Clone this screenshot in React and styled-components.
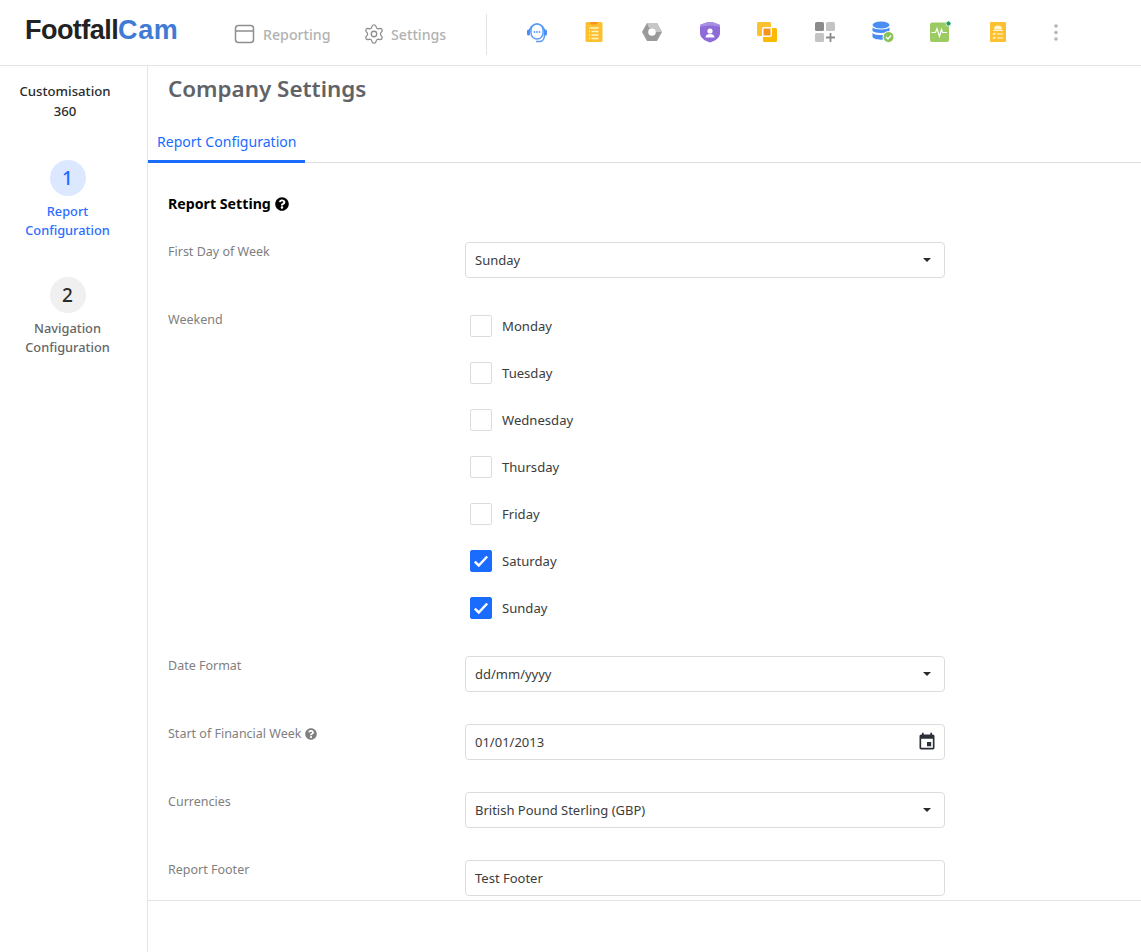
import styled, { createGlobalStyle } from 'styled-components';
import { Settings } from 'lucide-react';
import { FaQuestionCircle } from 'react-icons/fa';

const GlobalStyle = createGlobalStyle`
  html, body {
    margin: 0;
    padding: 0;
    height: 952px;
    overflow: hidden;
    background: #fff;
    font-family: 'Noto Sans', 'Open Sans', sans-serif;
    color: #212529;
  }
  * {
    box-sizing: border-box;
  }
`;

const Page = styled.div`
  height: 952px;
  display: flex;
  flex-direction: column;
`;

const Header = styled.header`
  height: 66px;
  flex: none;
  display: flex;
  align-items: center;
  padding-left: 25px;
  border-bottom: 1px solid #e4e4e4;
`;

const Logo = styled.div`
  width: 209px;
  margin-top: -5px;
  font-family: 'Liberation Sans', Arial, sans-serif;
  font-size: 27px;
  font-weight: 700;
  letter-spacing: -0.55px;
  color: #222;

  & > span {
    letter-spacing: 0.6px;
    color: #3f7bd5;
  }
`;

const NavItem = styled.div`
  display: flex;
  align-items: center;
  gap: ${(p) => p.$gap}px;
  width: ${(p) => p.$width}px;
  margin-top: 3px;
  font-size: 14.2px;
  font-weight: 500;
  color: #b2b2b2;

  & > svg {
    flex: none;
    color: #8e8e8e;
  }
`;

const Divider = styled.div`
  width: 1px;
  height: 41px;
  margin-left: 9px;
  margin-top: 3px;
  background: #e4e4e4;
`;

const IconBar = styled.div`
  display: flex;
  margin-left: 21px;
  margin-top: -2px;
`;

const IconSlot = styled.div`
  width: 57.65px;
  height: 24px;
  display: flex;
  align-items: center;
  justify-content: center;
`;

const Body = styled.div`
  flex: 1;
  display: flex;
  min-height: 0;
`;

const Sidebar = styled.aside`
  width: 148px;
  flex: none;
  border-right: 1px solid #e4e4e4;
  padding-top: 15px;
  text-align: center;
`;

const SidebarTitle = styled.div`
  width: 130px;
  font-size: 13.2px;
  font-weight: 500;
  line-height: 20px;
  color: #2b2b2b;
`;

const Step = styled.div`
  width: 135px;
  margin-top: ${(p) => p.$top}px;
  display: flex;
  flex-direction: column;
  align-items: center;
`;

const StepDot = styled.div`
  width: 36px;
  height: 36px;
  border-radius: 50%;
  display: flex;
  align-items: center;
  justify-content: center;
  font-size: 19px;
  font-weight: 500;
  background: ${(p) => (p.$active ? '#dce8ff' : '#f0f0f0')};
  color: ${(p) => (p.$active ? '#1a6cff' : '#2b2b2b')};
`;

const StepLabel = styled.div`
  margin-top: 6px;
  font-size: 12.8px;
  font-weight: 500;
  line-height: 19px;
  color: ${(p) => (p.$active ? '#2c6cff' : '#666')};
`;

const Main = styled.main`
  flex: 1;
  min-width: 0;
  display: flex;
  flex-direction: column;
`;

const Scroll = styled.div`
  height: 835px;
  flex: none;
  overflow: hidden;
  border-bottom: 1px solid #e4e4e4;
`;

const Title = styled.h1`
  margin: 0;
  padding: 5px 0 0 20px;
  font-size: 22.4px;
  font-weight: 600;
  line-height: 36px;
  color: #5f6368;
`;

const Tabs = styled.div`
  margin-top: 21px;
  height: 35px;
  display: flex;
  border-bottom: 1px solid #dedede;
`;

const Tab = styled.div`
  height: 35px;
  padding: 0 9px;
  font-size: 14.05px;
  line-height: 28px;
  color: #1a6cff;
  border-bottom: 3px solid #1a6cff;
`;

const Form = styled.div`
  padding: 30px 196px 0 20px;
`;

const SectionTitle = styled.h2`
  margin: 0 0 27px;
  display: flex;
  align-items: center;
  gap: 4px;
  font-size: 14.2px;
  font-weight: 700;
  line-height: 22px;
  color: #000;
`;

const Row = styled.div`
  display: grid;
  grid-template-columns: 297px 480px;
  margin-bottom: 32px;
`;

const Label = styled.div`
  display: flex;
  align-items: center;
  align-self: start;
  gap: 4px;
  margin-top: 1px;
  font-size: 12.5px;
  line-height: 18px;
  color: #808080;
`;

const Field = styled.div`
  height: 36px;
  display: flex;
  align-items: center;
  justify-content: space-between;
  padding: 0 11px 0 9px;
  border: 1px solid #dcdcdc;
  border-radius: 4px;
  font-size: 13px;
  color: #3c3c3c;

  & > svg {
    margin-right: -4px;
  }
`;

const Caret = styled.span`
  width: 0;
  height: 0;
  margin-right: 2px;
  border-left: 4px solid transparent;
  border-right: 4px solid transparent;
  border-top: 4px solid #2b2b2b;
`;

const CheckList = styled.div`
  display: flex;
  flex-direction: column;
  gap: 25px;
  padding: 5px 0 5px 5px;
`;

const CheckRow = styled.label`
  display: flex;
  align-items: center;
  gap: 10px;
  height: 22px;
  font-size: 13.1px;
  color: #3c3c3c;
`;

const Box = styled.span`
  width: 22px;
  height: 22px;
  display: flex;
  align-items: center;
  justify-content: center;
  border-radius: 2px;
  border: 1px solid ${(p) => (p.$checked ? '#1a6cff' : '#dcdcdc')};
  background: ${(p) => (p.$checked ? '#1a6cff' : '#fff')};
`;

const Headset = () => (
  <svg width="24" height="24" viewBox="0 0 24 24">
    <path d="M4.5 12a7.5 8 0 0 1 15 0v4a5 6 0 0 1-5 5.5H11" fill="none" stroke="#5a9bf6" strokeWidth="1.6" />
    <rect x="6" y="4" width="12" height="15" rx="6" fill="#fff" stroke="#5a9bf6" strokeWidth="1.4" />
    <rect x="2" y="9.5" width="3" height="6" rx="1.5" fill="#4a8df5" />
    <rect x="19" y="9.5" width="3" height="6" rx="1.5" fill="#4a8df5" />
    <circle cx="9.5" cy="12" r=".9" fill="#5a9bf6" />
    <circle cx="12" cy="12" r=".9" fill="#5a9bf6" />
    <circle cx="14.5" cy="12" r=".9" fill="#5a9bf6" />
  </svg>
);

const Clipboard = () => (
  <svg width="24" height="24" viewBox="0 0 24 24">
    <rect x="3.5" y="2" width="17" height="20" rx="1.5" fill="#fdc02f" />
    <rect x="8.5" y="2" width="7" height="2.5" fill="#f5931e" />
    <path d="M7.5 8h9M9.5 11.5h7M9.5 15h7M9.5 18.5h7M7 11.5h1M7 15h1M7 18.5h1" stroke="#fff2c8" strokeWidth="1.3" />
  </svg>
);

const Hexagon = () => (
  <svg width="24" height="24" viewBox="0 0 24 24">
    <path d="M7 3h10l5 9-5 9H7l-5-9z" fill="#9a9a9a" />
    <path d="M7 3h10l5 9h-6l-2-4H9z" fill="#c6c6c6" />
    <circle cx="12" cy="12" r="3.8" fill="#fff" />
  </svg>
);

const Shield = () => (
  <svg width="24" height="24" viewBox="0 0 24 24">
    <path d="M2 5c3-1.500 7-3 10-3s7 1.500 10 3v8c0 5-5 8-10 9.500C7 21 2 18 2 13z" fill="#8d6cd8" />
    <path d="M2 5c3-1.500 7-3 10-3s7 1.500 10 3v2c-3-1-7-1.500-10-1.500S5 6 2 7z" fill="#a98fe4" />
    <circle cx="12" cy="11" r="2.600" fill="#fff" />
    <path d="M7.500 17.500c0-2.500 2-3.500 4.500-3.500s4.500 1 4.500 3.500z" fill="#fff" />
  </svg>
);

const Layers = () => (
  <svg width="24" height="24" viewBox="0 0 24 24">
    <path d="M3.500 2h11A1.500 1.500 0 0 1 16 3.500V7H9a2 2 0 0 0-2 2v7H3.500A1.500 1.500 0 0 1 2 14.500v-11A1.500 1.500 0 0 1 3.500 2z" fill="#fdc02f" />
    <path d="M17 8h3.500A1.500 1.500 0 0 1 22 9.500v11a1.500 1.500 0 0 1-1.500 1.500h-11A1.500 1.500 0 0 1 8 20.500V17h7a2 2 0 0 0 2-2z" fill="#fdb900" />
    <rect x="8.500" y="8.500" width="7" height="7" fill="#f5931e" />
  </svg>
);

const AddGrid = () => (
  <svg width="24" height="24" viewBox="0 0 24 24">
    <rect x="2" y="2" width="9" height="9" rx="1.500" fill="#8b8b8b" />
    <rect x="13" y="2" width="9" height="9" rx="1.500" fill="#c4c4c4" />
    <rect x="2" y="13" width="9" height="9" rx="1.500" fill="#c4c4c4" />
    <path d="M17.500 13v9M13 17.500h9" stroke="#8b8b8b" strokeWidth="1.800" />
  </svg>
);

const Database = () => (
  <svg width="24" height="24" viewBox="0 0 24 24">
    <ellipse cx="10" cy="5" rx="8.500" ry="3.500" fill="#4a8df5" />
    <path d="M1.500 7.500c2 2.500 15 2.500 17 0V11c-2 2.500-15 2.500-17 0z" fill="#4a8df5" />
    <path d="M1.500 13c2 2.500 11 2.500 13 1.500l-2 5c-5 .5-11-.5-11-3z" fill="#4a8df5" />
    <circle cx="17.500" cy="17" r="5.500" fill="#8bc35a" stroke="#fff" strokeWidth="1" />
    <path d="M15 17l2 2 3-3.500" fill="none" stroke="#fff" strokeWidth="1.300" />
  </svg>
);

const Pulse = () => (
  <svg width="24" height="24" viewBox="0 0 24 24">
    <rect x="2" y="2.500" width="19" height="19.500" rx="2" fill="#9ccb63" />
    <path d="M3.500 12.500h4l1.500-4 2.500 8 2-7 1 3h4.500" fill="none" stroke="#fff" strokeWidth="1.200" />
    <circle cx="20.500" cy="3.500" r="2.500" fill="#18a05e" stroke="#fff" strokeWidth=".8" />
  </svg>
);

const SafetyList = () => (
  <svg width="24" height="24" viewBox="0 0 24 24">
    <rect x="4" y="2" width="16" height="20" rx="1" fill="#fdc02f" />
    <path d="M8 9.500a4 4 0 0 1 8 0z" fill="#fff6d8" />
    <path d="M7 10.500h10" stroke="#fff6d8" strokeWidth="1" />
    <path d="M7 13.500l1 1 1.500-1.500M7 17.500l1 1 1.500-1.500M11 14h6M11 18h6" fill="none" stroke="#fff6d8" strokeWidth="1.200" />
  </svg>
);

const Dots = () => (
  <svg width="24" height="24" viewBox="0 0 24 24">
    <circle cx="12" cy="6" r="1.800" fill="#b5b5b5" />
    <circle cx="12" cy="12.500" r="1.800" fill="#b5b5b5" />
    <circle cx="12" cy="19" r="1.800" fill="#b5b5b5" />
  </svg>
);

const PanelIcon = () => (
  <svg width="22" height="22" viewBox="0 0 22 22" fill="none" stroke="currentColor" strokeWidth="1.500">
    <rect x="1.500" y="2.500" width="18" height="17" rx="3" />
    <path d="M1.500 8h18" />
  </svg>
);

const CalendarIcon = () => (
  <svg width="20" height="20" viewBox="0 0 24 24" fill="#2b2f38">
    <path d="M17 12h-5v5h5v-5zM16 1v2H8V1H6v2H5c-1.110 0-1.990.9-1.990 2L3 19c0 1.100.89 2 2 2h14c1.100 0 2-.9 2-2V5c0-1.100-.9-2-2-2h-1V1h-2zm3 18H5V8h14v11z" />
  </svg>
);

const CheckMark = () => (
  <svg width="18" height="18" viewBox="0 0 16 16" fill="none" stroke="#fff" strokeWidth="2.200">
    <path d="M2.500 8.500l3.500 3.500 7.500-8" />
  </svg>
);

const toolIcons = [Headset, Clipboard, Hexagon, Shield, Layers, AddGrid, Database, Pulse, SafetyList, Dots];

const days = [
  { name: 'Monday' },
  { name: 'Tuesday' },
  { name: 'Wednesday' },
  { name: 'Thursday' },
  { name: 'Friday' },
  { name: 'Saturday', checked: true },
  { name: 'Sunday', checked: true },
];

const App = () => (
  <Page>
    <GlobalStyle />
    <Header>
      <Logo>
        Footfall<span>Cam</span>
      </Logo>
      <NavItem $gap={7} $width={129}>
        <PanelIcon />
        Reporting
      </NavItem>
      <NavItem $gap={6} $width={114}>
        <Settings size={22} strokeWidth={1.4} />
        Settings
      </NavItem>
      <Divider />
      <IconBar>
        {toolIcons.map((Icon, i) => (
          <IconSlot key={i}>
            <Icon />
          </IconSlot>
        ))}
      </IconBar>
    </Header>

    <Body>
      <Sidebar>
        <SidebarTitle>
          Customisation
          <br />
          360
        </SidebarTitle>
        <Step $top={39}>
          <StepDot $active>1</StepDot>
          <StepLabel $active>
            Report
            <br />
            Configuration
          </StepLabel>
        </Step>
        <Step $top={37}>
          <StepDot>2</StepDot>
          <StepLabel>
            Navigation
            <br />
            Configuration
          </StepLabel>
        </Step>
      </Sidebar>

      <Main>
        <Scroll>
          <Title>Company Settings</Title>
          <Tabs>
            <Tab>Report Configuration</Tab>
          </Tabs>
          <Form>
            <SectionTitle>
              Report Setting <FaQuestionCircle size={14} />
            </SectionTitle>
            <Row>
              <Label>First Day of Week</Label>
              <Field>
                Sunday
                <Caret />
              </Field>
            </Row>
            <Row>
              <Label>Weekend</Label>
              <CheckList>
                {days.map((d) => (
                  <CheckRow key={d.name}>
                    <Box $checked={d.checked}>{d.checked && <CheckMark />}</Box>
                    {d.name}
                  </CheckRow>
                ))}
              </CheckList>
            </Row>
            <Row>
              <Label>Date Format</Label>
              <Field>
                dd/mm/yyyy
                <Caret />
              </Field>
            </Row>
            <Row>
              <Label>
                Start of Financial Week <FaQuestionCircle size={12} />
              </Label>
              <Field>
                01/01/2013
                <CalendarIcon />
              </Field>
            </Row>
            <Row>
              <Label>Currencies</Label>
              <Field>
                British Pound Sterling (GBP)
                <Caret />
              </Field>
            </Row>
            <Row>
              <Label>Report Footer</Label>
              <Field>Test Footer</Field>
            </Row>
          </Form>
        </Scroll>
      </Main>
    </Body>
  </Page>
);

export default App;
